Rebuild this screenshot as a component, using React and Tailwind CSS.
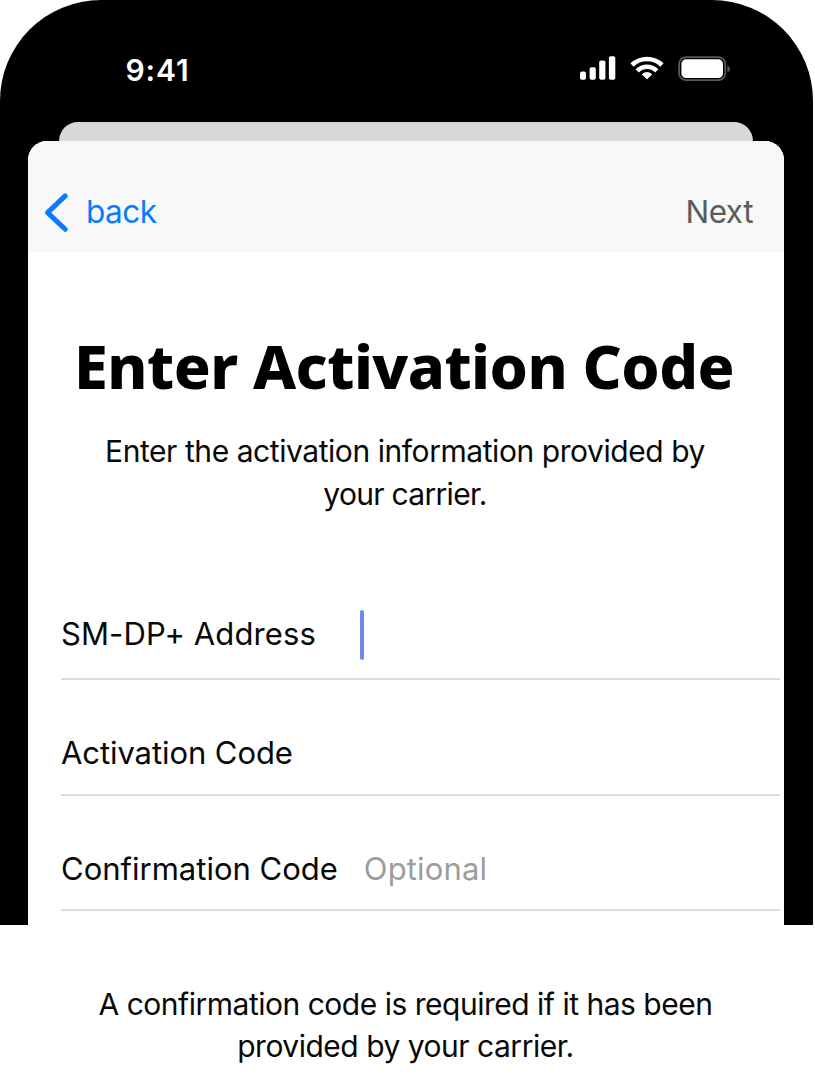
import React from "react";

function SignalIcon() {
  return (
    <svg width="36" height="25" viewBox="0 0 36 25" fill="white">
      <rect x="0" y="15.6" width="6" height="8.2" rx="1.8" />
      <rect x="9.6" y="11.2" width="6.2" height="12.6" rx="1.8" />
      <rect x="19.2" y="4.4" width="6.2" height="19.4" rx="1.8" />
      <rect x="28.9" y="0.3" width="6.4" height="23.5" rx="1.8" />
    </svg>
  );
}

function WifiIcon() {
  return (
    <svg width="34" height="25" viewBox="0 0 34 25" fill="none" stroke="white" strokeWidth="4.6">
      <path d="M2 9 A21.6 21.6 0 0 1 32 9" />
      <path d="M7.2 14.8 A13.8 13.8 0 0 1 26.8 14.8" />
      <path d="M17 23 L12.2 18.4 A6.8 6.8 0 0 1 21.8 18.4 Z" fill="white" stroke="white" strokeWidth="0.8" strokeLinejoin="round" />
    </svg>
  );
}

function BatteryIcon() {
  return (
    <svg width="54" height="26" viewBox="0 0 54 26" fill="none">
      <rect x="1.1" y="1.1" width="46.2" height="23.1" rx="7" stroke="#5a5a5a" strokeWidth="1.8" />
      <rect x="3.4" y="3.3" width="41.6" height="18.7" rx="4.6" fill="white" />
      <path d="M49.4 9.4 Q52 10.6 52 13 Q52 15.4 49.4 16.6 Z" fill="#555555" />
    </svg>
  );
}

function StatusBar() {
  return (
    <div className="flex h-[121.5px] items-start justify-between pr-[81px] pl-[125.5px] text-white">
      <span className="mt-[50px] text-[30px] leading-10 font-semibold tracking-[0.9px]">9:41</span>
      <div className="mt-14 flex items-start">
        <SignalIcon />
        <div className="ml-[14px]">
          <WifiIcon />
        </div>
        <div className="ml-[14.5px]">
          <BatteryIcon />
        </div>
      </div>
    </div>
  );
}

function Field({ label, className, children }) {
  return (
    <div className={"flex items-end border-b-2 border-[#dcdcdc] " + className}>
      <span className="text-[31px] leading-10 whitespace-nowrap">{label}</span>
      {children}
    </div>
  );
}

export default function App() {
  return (
    <div className="h-[1084px] overflow-hidden bg-white font-['Inter',sans-serif] text-[#080808]">
      <div className="flex h-[925px] w-[813px] flex-col overflow-hidden rounded-t-[101px] bg-black">
        <StatusBar />
        <div className="mr-[60px] ml-[59px] h-[19.5px] shrink-0 rounded-t-[19px] bg-[#d8d8d8]" />
        <div className="mr-[29px] ml-7 flex-1 overflow-hidden rounded-t-[19px] bg-white">
          <div className="flex h-[111px] items-start justify-between bg-[#f8f8f8] pr-[31px] pl-4">
            <div className="flex text-[#087cff]">
              <svg className="mt-[51px]" width="25" height="40" viewBox="0 0 25 40" fill="none">
                <path d="M21.2 3.9 L3.6 20.6 L21.2 37.3" stroke="currentColor" strokeWidth="5" strokeLinecap="round" strokeLinejoin="round" />
              </svg>
              <span className="mt-[51px] ml-[17px] text-[31.5px] leading-10 tracking-[-0.5px]">back</span>
            </div>
            <span className="mt-[51px] text-[31.5px] leading-10 tracking-[-0.5px] text-[#5c5c5c]">Next</span>
          </div>
          <h1 className="mt-[74px] pl-[46px] font-['Noto_Sans',sans-serif] text-[61px] leading-[80px] font-extrabold tracking-[-0.52px] whitespace-nowrap text-black">
            Enter Activation Code
          </h1>
          <p className="mt-6 mr-[2px] text-center text-[30px] leading-[42.5px] tracking-[-0.44px]">
            Enter the activation information provided by
            <br />
            <span className="tracking-[-0.7px]">your carrier.</span>
          </p>
          <div className="mr-1 ml-[33px]">
            <Field label={<span className="tracking-[0.1px]">SM-DP+ Address</span>} className="mt-[88px] h-[77px] pb-[24px]">
              <span className="mb-[-6px] ml-[44.5px] h-[50px] w-1 rounded-sm bg-[#6d89ee]" />
            </Field>
            <Field label={<span className="tracking-[-0.08px]">Activation Code</span>} className="h-[116px] pb-[21px]" />
            <Field label="Confirmation Code" className="h-[115px] pb-[20px]">
              <span className="ml-[26px] text-[31px] leading-10 tracking-[0.15px] text-[#9c9c9c]">Optional</span>
            </Field>
          </div>
        </div>
      </div>
      <p className="mt-[57.5px] w-[811px] text-center text-[30px] leading-[42.5px] tracking-[-0.49px]">
        A confirmation code is required if it has been
        <br />
        provided by your carrier.
      </p>
    </div>
  );
}
